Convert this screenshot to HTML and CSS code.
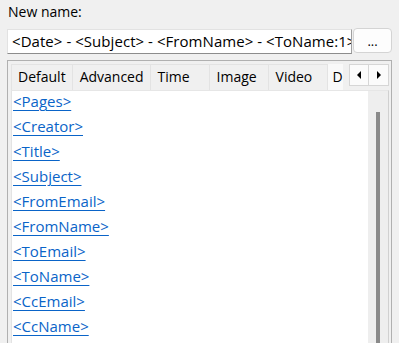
FILE: index.html
```html
<!DOCTYPE html>
<html>
<head>
<meta charset="utf-8">
<link rel="stylesheet" href="styles.css">
</head>
<body>
<div class="label">New name:</div>
<div class="name-row">
  <div class="textbox">&lt;Date&gt; - &lt;Subject&gt; - &lt;FromName&gt; - &lt;ToName:1&gt;</div>
  <div class="btn">...</div>
</div>
<div class="tabctl">
  <div class="tabstrip">
    <div class="tab">Default</div>
    <div class="tab">Advanced</div>
    <div class="tab">Time</div>
    <div class="tab">Image</div>
    <div class="tab">Video</div>
    <div class="tab sel">D</div>
    <div class="arrows">
      <div class="arrow"><svg width="6" height="8" viewBox="0 0 6 8"><path d="M5 0 L1 4 L5 8 Z" fill="#000"/></svg></div>
      <div class="arrow"><svg width="6" height="8" viewBox="0 0 6 8"><path d="M1 0 L5 4 L1 8 Z" fill="#000"/></svg></div>
    </div>
  </div>
  <div class="page">
    <div class="list">
      <a class="lnk">&lt;Pages&gt;</a>
      <a class="lnk">&lt;Creator&gt;</a>
      <a class="lnk">&lt;Title&gt;</a>
      <a class="lnk">&lt;Subject&gt;</a>
      <a class="lnk">&lt;FromEmail&gt;</a>
      <a class="lnk">&lt;FromName&gt;</a>
      <a class="lnk">&lt;ToEmail&gt;</a>
      <a class="lnk">&lt;ToName&gt;</a>
      <a class="lnk">&lt;CcEmail&gt;</a>
      <a class="lnk">&lt;CcName&gt;</a>
    </div>
    <div class="scroll"><div class="thumb"></div></div>
  </div>
</div>
</body>
</html>
```

FILE: styles.css
```css
html, body {
  margin: 0;
  padding: 0;
}
body {
  width: 399px;
  height: 343px;
  overflow: hidden;
  background: #f0f0f0;
  font-family: "Open Sans", "Noto Sans", sans-serif;
  font-size: 14px;
  color: #000;
}
.label {
  padding: 2px 0 0 8px;
  height: 27px;
  line-height: 19px;
  box-sizing: border-box;
}
.name-row {
  display: flex;
  align-items: flex-start;
  margin-left: 7px;
  gap: 1px;
}
.textbox {
  box-sizing: border-box;
  width: 345px;
  height: 25px;
  margin-top: 2px;
  background: #fff;
  border: 1px solid #e2e2e2;
  border-bottom-color: #8c8c8c;
  border-right-color: #a0a0a0;
  padding: 0 0 0 4px;
  font-size: 15px;
  letter-spacing: 0.05px;
  line-height: 22px;
  white-space: nowrap;
  overflow: hidden;
}
.btn {
  box-sizing: border-box;
  width: 39px;
  height: 25px;
  margin-top: 1px;
  background: #fdfdfd;
  border: 1px solid #d4d4d4;
  border-radius: 4px;
  text-align: center;
  line-height: 24px;
  font-size: 13px;
}
.tabctl {
  box-sizing: border-box;
  display: flex;
  flex-direction: column;
  margin: 6px 0 0 7px;
  width: 385px;
  height: 284px;
  border: 1px solid #b0b0b0;
  border-bottom: none;
  padding: 3px 2px 0 3px;
}
.tabstrip {
  position: relative;
  display: flex;
  height: 26px;
  flex: none;
  overflow: hidden;
}
.tab {
  box-sizing: border-box;
  height: 26px;
  min-width: 59px;
  padding: 0 6px 0 7px;
  border: 1px solid #e3e3e3;
  border-right: none;
  border-bottom: none;
  background: #f0f0f0;
  line-height: 24px;
  white-space: nowrap;
  flex: none;
}
.tab:first-child {
  min-width: 60px;
  padding-left: 6px;
}
.tab.sel {
  background: #f9f9f9;
  height: 28px;
  margin-top: -2px;
  line-height: 28px;
  min-width: 40px;
  padding-left: 5px;
}
.arrows {
  position: absolute;
  right: 0;
  top: 0;
  display: flex;
  padding-left: 6px;
  height: 26px;
  background: #f0f0f0;
}
.arrow {
  box-sizing: border-box;
  width: 20px;
  height: 22px;
  border: 1px solid #d6d6d6;
  background: #fbfbfb;
  display: flex;
  align-items: center;
  justify-content: center;
}
.arrow + .arrow {
  border-left: none;
}
.page {
  flex: 1;
  display: flex;
  background: #fff;
  border-top: 1px solid #e6e6e6;
  border-left: 1px solid #e3e3e3;
  border-right: 1px solid #d0d0d0;
  overflow: hidden;
}
.list {
  flex: 1;
  display: flex;
  flex-direction: column;
  align-items: flex-start;
  padding-left: 1px;
  margin-top: -2px;
}
.lnk {
  font-size: 15px;
  line-height: 25px;
  color: #0a64c8;
  text-decoration: underline;
  text-underline-offset: 3px;
}
.scroll {
  width: 20px;
  flex: none;
  background: #eeeeee;
  display: flex;
  justify-content: center;
  padding-top: 21px;
  box-sizing: border-box;
}
.thumb {
  width: 4px;
  flex: none;
  background: #8a8a8a;
  margin-left: -1px;
}
```
